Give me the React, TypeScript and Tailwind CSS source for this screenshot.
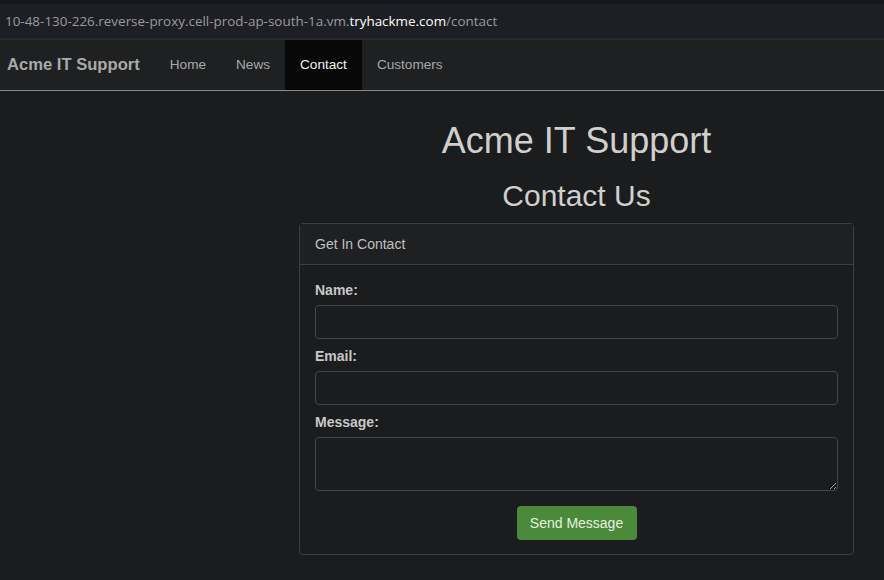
import React from 'react';

const NavLink: React.FC<{ label: string; active?: boolean }> = ({ label, active }) => (
  <a
    className={
      active
        ? 'flex h-full items-center bg-[#080808] px-[15px] pt-[1px] text-[13.6px] text-[#f0f0f0]'
        : 'flex h-full items-center px-[15px] pt-[1px] text-[13.6px] text-[#a8a8a8]'
    }
  >
    {label}
  </a>
);

const Field: React.FC<{ label: string; multiline?: boolean }> = ({ label, multiline }) => (
  <div className="mb-[7px]">
    <label className="mb-[5px] block text-[14px] leading-[20px] font-bold text-[#c8c8c8]">{label}</label>
    {multiline ? (
      <textarea className="block h-[54px] w-full rounded-[4px] border border-[#444548] bg-[#1b1c1e]" />
    ) : (
      <input className="block h-[34px] w-full rounded-[4px] border border-[#444548] bg-[#1b1c1e]" />
    )}
  </div>
);

export default function App() {
  return (
    <div className="flex min-h-[580px] flex-col bg-[#1b1c1e] font-['Liberation_Sans',Arial,sans-serif]">
      <div className="h-[4px] bg-[#16171a]" />
      <div className="flex h-[34px] items-center bg-[#1e1f24] px-[5px] pt-[1px] font-['Open_Sans',sans-serif] text-[13.45px] text-[#9a9a9e]">
        <span>10-48-130-226.reverse-proxy.cell-prod-ap-south-1a.vm.</span>
        <span className="text-white">tryhackme.com</span>
        <span>/contact</span>
      </div>
      <div className="h-[2px] bg-[#2a2b2e]" />
      <nav className="flex h-[51px] items-stretch border-b border-[#8a8a8a] bg-[#1f2022]">
        <div className="flex items-center pt-[1px] pr-[15px] pl-[7px] text-[16.6px] font-bold text-[#a9a9a6]">Acme IT Support</div>
        <NavLink label="Home" />
        <NavLink label="News" />
        <NavLink label="Contact" active />
        <NavLink label="Customers" />
      </nav>
      <div className="flex">
        <div className="w-[299px] shrink-0" />
        <div className="w-[555px]">
          <h1 className="mt-[30px] text-center text-[36px] leading-[40px] text-[#cfcfcb]">Acme IT Support</h1>
          <h2 className="mt-[17px] text-center text-[30px] leading-[36px] text-[#cfcfcb]">Contact Us</h2>
          <div className="mt-[9px] rounded-[4px] border border-[#3d3e41]">
            <div className="flex h-[41px] items-center border-b border-[#3d3e41] bg-[#1f2022] px-[15px] text-[14px] text-[#c0c0c0]">
              Get In Contact
            </div>
            <div className="px-[15px] pt-[15px] pb-[14px]">
              <Field label="Name:" />
              <Field label="Email:" />
              <Field label="Message:" multiline />
              <div className="flex justify-center pt-[8px]">
                <button className="h-[34px] w-[120px] rounded-[4px] bg-[#4a8a3a] text-[14px] text-[#e8f0e4]">
                  Send Message
                </button>
              </div>
            </div>
          </div>
        </div>
      </div>
    </div>
  );
}
